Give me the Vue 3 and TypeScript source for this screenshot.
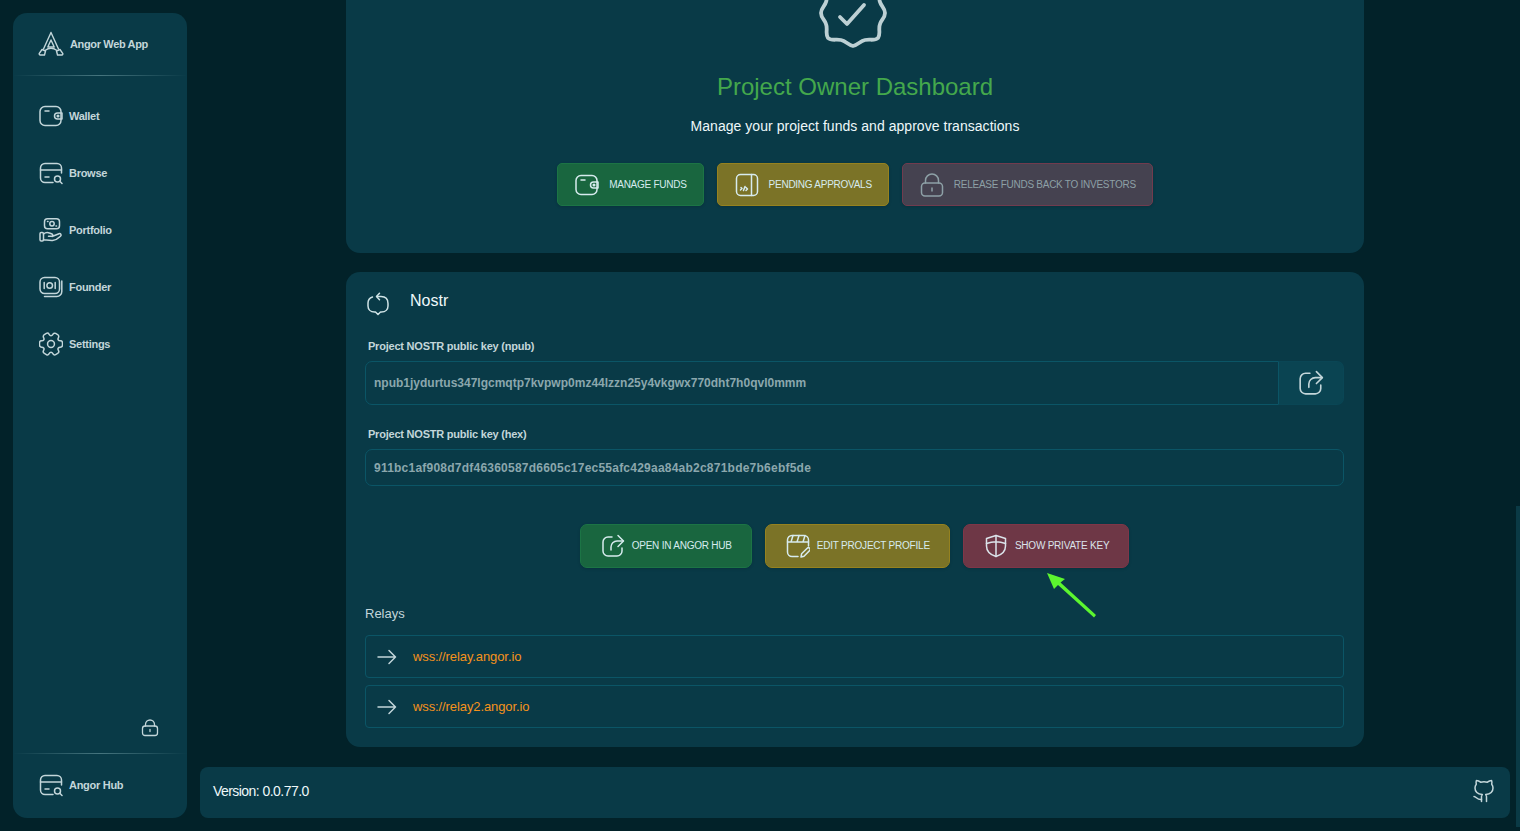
<template>
  <div class="shell">
    <aside class="sidebar">
      <div class="brand">
        <svg class="brand-logo" viewBox="0 0 26 26" fill="none" stroke="currentColor" stroke-width="1.4" stroke-linejoin="round" stroke-linecap="round">
          <path d="M13 1.500 L20.500 18 M13 1.500 L5.500 18" />
          <path d="M13 9 L16.200 16 H9.800 Z" />
          <path d="M7 19.500 Q13 15 19 19.500" />
          <path d="M4 18.500 L7.500 20 L6.500 24 H2 Q.8 23.500 1.300 22.300 Z" />
          <path d="M22 18.500 L18.500 20 L19.500 24 H24 Q25.200 23.500 24.700 22.300 Z" />
        </svg>
        <span>Angor Web App</span>
      </div>
      <div class="rule"></div>
      <nav class="nav">
        <a v-for="item in navItems" :key="item.label" class="nav-item">
          <svg class="nav-icon" viewBox="0 0 24 24" fill="none" stroke="currentColor" stroke-width="1.5" stroke-linecap="round" stroke-linejoin="round" v-html="item.icon"></svg>
          <span>{{ item.label }}</span>
        </a>
      </nav>
      <div class="side-bottom">
        <svg class="side-lock" viewBox="0 0 18 18" fill="none" stroke="currentColor" stroke-width="1.3" stroke-linecap="round">
          <rect x="1.500" y="7" width="15" height="9.500" rx="2.500" />
          <path d="M4.500 7V5.500a4.500 4.500 0 0 1 9 0V7M9 10.500v2" />
        </svg>
      </div>
      <div class="rule"></div>
      <a class="nav-item hub">
        <svg class="nav-icon" viewBox="0 0 24 24" fill="none" stroke="currentColor" stroke-width="1.5" stroke-linecap="round" stroke-linejoin="round" v-html="icons.card"></svg>
        <span>Angor Hub</span>
      </a>
    </aside>

    <div class="main">
      <div class="scroller">
        <section class="card dashboard">
          <svg class="badge" viewBox="0 0 68 72" fill="none" stroke="currentColor" stroke-width="3.800" stroke-linecap="round" stroke-linejoin="round">
            <path d="M34 3 C39 3 41 8 46 9 C51 10 56 8 59 12 C62 16 59 21 61 26 C62 30 66 32 66 37 C66 42 62 44 61 48 C59 53 62 58 59 62 C56 65 51 63 46 64 C41 65 39 69 34 70 C29 69 27 65 22 64 C17 63 12 65 9 62 C6 58 9 53 7 48 C6 44 2 42 2 37 C2 32 6 30 7 26 C9 21 6 16 9 12 C12 8 17 10 22 9 C27 8 29 3 34 3 Z" />
            <path d="M21 41 L28 48 L45 29" />
          </svg>
          <h1>Project Owner Dashboard</h1>
          <p class="lead">Manage your project funds and approve transactions</p>
          <div class="actions top-actions">
            <button type="button" class="action green">
              <svg class="action-icon" viewBox="0 0 24 24" fill="none" stroke="currentColor" stroke-width="1.500" stroke-linecap="round" stroke-linejoin="round" v-html="icons.wallet"></svg>
              MANAGE FUNDS
            </button>
            <button type="button" class="action yellow">
              <svg class="action-icon" viewBox="0 0 24 24" fill="none" stroke="currentColor" stroke-width="1.500" stroke-linecap="round" stroke-linejoin="round">
                <rect x="1.500" y="1.500" width="21" height="21" rx="4" />
                <path d="M16.500 1.500v21M5.500 17l1.500-1.500M6 14.500l1 1M8.500 17.500l1.500-4M11 14.500l1.500 1.500-1.500 1.500" />
              </svg>
              PENDING APPROVALS
            </button>
            <button type="button" class="action muted">
              <svg class="action-icon lock" viewBox="0 0 24 24" fill="none" stroke="currentColor" stroke-width="1.500" stroke-linecap="round">
                <rect x="1.500" y="10" width="21" height="13" rx="3.500" />
                <path d="M5.500 10V7.500a6.500 6.500 0 0 1 13 0V10M12 15v3" />
              </svg>
              RELEASE FUNDS BACK TO INVESTORS
            </button>
          </div>
        </section>

        <section class="card nostr">
          <div class="nostr-head">
            <svg class="nostr-icon" viewBox="0 0 24 24" fill="none" stroke="currentColor" stroke-width="1.500" stroke-linecap="round" stroke-linejoin="round">
              <path d="M11 4.500 H15 C19.500 4.500 22 7 22 11.500 V14 C22 17.500 19.500 20 15.500 20 H14.500 L12 22.500 L9.500 20 H8.500 C4.500 20 2 17.500 2 14 V11 C2 8 3.500 6 6.500 5" />
              <path d="M13.500 1.200 L10.500 4.500 L13.500 7.800" />
            </svg>
            <h2>Nostr</h2>
          </div>
          <label class="field-label first">Project NOSTR public key (npub)</label>
          <div class="input-group">
            <div class="input joined">npub1jydurtus347lgcmqtp7kvpwp0mz44lzzn25y4vkgwx770dht7h0qvl0mmm</div>
            <button type="button" class="share-btn">
              <svg viewBox="0 0 24 24" fill="none" stroke="currentColor" stroke-width="1.500" stroke-linecap="round" stroke-linejoin="round" v-html="icons.share"></svg>
            </button>
          </div>
          <label class="field-label second">Project NOSTR public key (hex)</label>
          <div class="input hex">911bc1af908d7df46360587d6605c17ec55afc429aa84ab2c871bde7b6ebf5de</div>

          <div class="actions nostr-actions">
            <button type="button" class="action green tight">
              <svg class="action-icon" viewBox="0 0 24 24" fill="none" stroke="currentColor" stroke-width="1.500" stroke-linecap="round" stroke-linejoin="round" v-html="icons.share"></svg>
              OPEN IN ANGOR HUB
            </button>
            <button type="button" class="action yellow tight">
              <svg class="action-icon" viewBox="0 0 24 24" fill="none" stroke="currentColor" stroke-width="1.500" stroke-linecap="round" stroke-linejoin="round">
                <path d="M22.500 12V6a4.500 4.500 0 0 0-4.500-4.500H6A4.500 4.500 0 0 0 1.500 6v12A4.500 4.500 0 0 0 6 22.500h6" />
                <path d="M1.500 8h21M7 1.500 5 8M13 1.500 11 8M19 1.500 17 8" />
                <path d="M15 23l.6-3.200 5.600-5.600a1.600 1.600 0 0 1 2.400 2.400L18 22.200Z" />
              </svg>
              EDIT PROJECT PROFILE
            </button>
            <div class="key-wrap">
              <button type="button" class="action red tight">
                <svg class="action-icon shield" viewBox="0 0 24 24" fill="none" stroke="currentColor" stroke-width="1.500" stroke-linecap="round" stroke-linejoin="round">
                  <path d="M12 1.500 L21.500 4.500 V12 C21.500 17.500 17 21 12 22.500 C7 21 2.500 17.500 2.500 12 V4.500 Z" />
                  <path d="M12 1.500V22.500M2.500 9.500Q12 6 21.500 9.500" />
                </svg>
                SHOW PRIVATE KEY
              </button>
              <svg class="pointer" viewBox="0 0 54 48">
                <path d="M2 2 L20 8 L15.500 11.500 L51 44 L49 46.500 L13 14 L9 18 Z" fill="#5cf52f" />
              </svg>
            </div>
          </div>

          <h3 class="relays-title">Relays</h3>
          <div class="relays">
            <div v-for="relay in relays" :key="relay" class="relay">
              <svg viewBox="0 0 20 16" fill="none" stroke="currentColor" stroke-width="1.500" stroke-linecap="round" stroke-linejoin="round">
                <path d="M1 8H18.500M12 1.500 18.500 8 12 14.500" />
              </svg>
              <span>{{ relay }}</span>
            </div>
          </div>
        </section>
      </div>

      <footer class="footer">
        <span>Version: 0.0.77.0</span>
        <svg class="github" viewBox="0 0 22 24" fill="none" stroke="currentColor" stroke-width="1.500" stroke-linecap="round" stroke-linejoin="round">
          <path d="M8.500 22.500V18c-.2-1 .2-1.900.8-2.400C5 15 2 13.500 2 9c0-1.500.5-2.800 1.300-3.800C3 4 3 2.600 3.400 1.500 5 1.600 6.500 2.300 7.600 3.200a11 11 0 0 1 6.800 0c1.100-.9 2.600-1.600 4.200-1.700.4 1.100.4 2.500.1 3.700.8 1 1.300 2.300 1.300 3.800 0 4.500-3 6-7.300 6.600.6.5 1 1.400.8 2.400v4.500" />
          <path d="M1 17.500c2.500.3 3 3.500 7.500 3" />
        </svg>
      </footer>
    </div>

    <div class="scroll-thumb"></div>
  </div>
</template>

<script setup lang="ts">
const icons = {
  wallet:
    '<rect x="1" y="2.500" width="21" height="19" rx="5"/><path d="M6 7h4"/><path d="M23 9h-4.500a3 3 0 0 0 0 6H23Z"/><circle cx="19" cy="12" r=".8"/>',
  card:
    '<path d="M22.500 12V7a4.500 4.500 0 0 0-4.500-4.500H6A4.500 4.500 0 0 0 1.500 7v10A4.500 4.500 0 0 0 6 21.500h8"/><path d="M1.500 9h21M6 16h4"/><circle cx="18.500" cy="18" r="3"/><path d="M20.800 20.300l2.200 2.200"/>',
  hand:
    '<rect x="5.500" y=".8" width="15" height="10" rx="3"/><circle cx="13" cy="5.800" r="2.200"/><path d="M8.500 3.500h.5M17 8h.5"/><rect x="1" y="14.500" width="3.500" height="8.500" rx="1.200"/><path d="M4.500 16c2-1.800 4-2 6-1l2.500 1c1.300.6.8 2.300-.6 2.200H9.500M13 18.500l7-2.800c1.800-.5 2.800 1.200 1.500 2.500-2.500 2.400-5 4-8 4.300-3 .2-6-.5-9-.8"/>',
  money:
    '<rect x="1" y="2.500" width="19.500" height="16" rx="4.500"/><path d="M5.200 7.500v6M16.200 7.500v6"/><circle cx="10.700" cy="10.500" r="2.800"/><path d="M22.800 6v10.500a5 5 0 0 1-5 5H5.500"/>',
  gear:
    '<g transform="translate(-1.800 -1.800) scale(1.150)" stroke-width="1.300"><circle cx="12" cy="12" r="3"/><path d="M2 12.880v-1.760c0-1.040.85-1.900 1.900-1.900 1.810 0 2.550-1.280 1.640-2.850-.52-.9-.21-2.070.7-2.590l1.730-.99c.79-.47 1.810-.19 2.280.6l.11.19c.9 1.570 2.380 1.570 3.290 0l.11-.19c.47-.79 1.490-1.070 2.280-.6l1.730.99c.91.52 1.220 1.690.7 2.590-.91 1.570-.17 2.850 1.640 2.850 1.040 0 1.900.85 1.900 1.900v1.760c0 1.040-.85 1.900-1.900 1.900-1.810 0-2.550 1.280-1.640 2.850.52.91.21 2.070-.7 2.590l-1.730.99c-.79.47-1.810.19-2.280-.6l-.11-.19c-.9-1.570-2.380-1.570-3.290 0l-.11.19c-.47.79-1.490 1.070-2.280.6l-1.730-.99a1.900 1.900 0 0 1-.7-2.590c.91-1.570.17-2.850-1.640-2.850-1.050 0-1.900-.86-1.900-1.900Z"/></g>',
  share:
    '<path d="M11 3H7a5 5 0 0 0-5 5v9a5 5 0 0 0 5 5h9a5 5 0 0 0 5-5v-3"/><path d="M17 1.500 22.500 7 17 12.500"/><path d="M22 7h-6a6 6 0 0 0-6 6v3"/>',
}

const navItems = [
  { label: 'Wallet', icon: icons.wallet },
  { label: 'Browse', icon: icons.card },
  { label: 'Portfolio', icon: icons.hand },
  { label: 'Founder', icon: icons.money },
  { label: 'Settings', icon: icons.gear },
]

const relays = ['wss://relay.angor.io', 'wss://relay2.angor.io']
</script>

<style>
html,
body {
  margin: 0;
  background: #022229;
  overflow: hidden;
}
</style>

<style scoped>
.shell {
  position: relative;
  display: flex;
  gap: 13px;
  height: 831px;
  padding: 13px 10px 13px 13px;
  box-sizing: border-box;
  background: #022229;
  font-family: "Liberation Sans", Arial, sans-serif;
  color: #cfe3e6;
  overflow: hidden;
}

.sidebar {
  flex: 0 0 174px;
  display: flex;
  flex-direction: column;
  border-radius: 14px;
  background: #093a47;
  box-sizing: border-box;
}

.brand {
  display: flex;
  align-items: center;
  gap: 6px;
  height: 62px;
  padding-left: 25px;
  font-size: 11px;
  font-weight: 700;
  letter-spacing: -0.35px;
  color: #c3d6da;
}

.brand-logo {
  width: 26px;
  height: 26px;
  color: #c3d6da;
}

.rule {
  flex: none;
  height: 1px;
  background: linear-gradient(90deg, rgba(120, 165, 172, 0), rgba(120, 165, 172, 0.55) 50%, rgba(120, 165, 172, 0));
}

.nav {
  display: flex;
  flex-direction: column;
  gap: 25px;
  padding-top: 24px;
}

.nav-item {
  display: flex;
  align-items: center;
  gap: 6px;
  height: 32px;
  padding-left: 26px;
  font-size: 11px;
  font-weight: 700;
  letter-spacing: -0.28px;
  color: #c3d6da;
}

.nav-icon {
  flex: none;
  width: 24px;
  height: 24px;
}

.side-bottom {
  flex: 1;
  display: flex;
  align-items: flex-end;
  justify-content: flex-end;
  padding: 0 28px 16px 0;
}

.side-lock {
  width: 18px;
  height: 18px;
  color: #c3d6da;
}

.hub {
  margin: 15px 0 17px;
}

.main {
  flex: 1;
  min-width: 0;
  display: flex;
  flex-direction: column;
  gap: 20px;
  margin-top: -13px;
}

.scroller {
  flex: 1;
  min-height: 0;
  display: flex;
  flex-direction: column;
  align-items: center;
  gap: 19px;
  overflow: hidden;
}

.card {
  flex: none;
  width: 1018px;
  box-sizing: border-box;
  border-radius: 14px;
  background: #093a47;
}

.dashboard {
  display: flex;
  flex-direction: column;
  align-items: center;
  margin-top: -28px;
  height: 281px;
}

.badge {
  flex: none;
  width: 68px;
  height: 72px;
  margin: 4px 4px 0 0;
  color: #bdd0d4;
}

h1 {
  margin: 24px 0 0;
  font-size: 24px;
  line-height: 30px;
  font-weight: 400;
  color: #44a84c;
}

.lead {
  margin: 15px 0 0;
  font-size: 14px;
  line-height: 18px;
  letter-spacing: 0.04px;
  color: #eef8fa;
}

.actions {
  display: flex;
  gap: 13px;
}

.top-actions {
  margin-top: 28px;
}

.action {
  display: flex;
  align-items: center;
  gap: 10px;
  height: 43px;
  padding: 0 16px 0 17px;
  box-sizing: border-box;
  border: 1px solid;
  border-radius: 5px;
  font-family: inherit;
  font-size: 10px;
  line-height: 10px;
  letter-spacing: -0.26px;
  white-space: nowrap;
  color: #d7ebee;
  box-shadow: 0 1px 3px rgba(0, 0, 0, 0.15);
}

.action-icon {
  flex: none;
  width: 24px;
  height: 24px;
}

.action.tight {
  height: 44px;
  padding: 0 19px 0 20px;
  gap: 7px;
  border-radius: 7px;
  letter-spacing: -0.22px;
}

.green {
  background: #19663f;
  border-color: #1c7445;
}

.yellow {
  background: #7b7327;
  border-color: #96821f;
}

.muted {
  background: #454250;
  border-color: #713b4e;
  color: #8da0a6;
}

.red {
  background: #6e3746;
  border-color: #7f3648;
  color: #dbe3ea;
}

.nostr {
  height: 475px;
  padding: 0 20px 0 19px;
}

.nostr-head {
  display: flex;
  align-items: center;
  height: 60px;
}

.nostr-icon {
  width: 24px;
  height: 24px;
  margin: 4px 0 0 1px;
}

h2 {
  margin: 0 0 2px 20px;
  font-size: 16px;
  font-weight: 400;
  color: #eef8fa;
}

.field-label {
  display: block;
  padding-left: 3px;
  font-size: 11px;
  line-height: 14px;
  font-weight: 700;
  letter-spacing: -0.22px;
  color: #c3d6da;
}

.first {
  margin-top: 7px;
}

.second {
  margin-top: 22px;
}

.input-group {
  display: flex;
  margin-top: 8px;
  height: 44px;
}

.input {
  flex: 1;
  display: flex;
  align-items: center;
  padding-left: 8px;
  box-sizing: border-box;
  border: 1px solid #0b5566;
  border-radius: 7px;
  font-size: 12px;
  font-weight: 700;
  color: #8ba7ad;
  background: #093a47;
}

.joined {
  border-radius: 7px 0 0 7px;
}

.share-btn {
  flex: 0 0 65px;
  display: flex;
  align-items: center;
  justify-content: center;
  padding: 0;
  border: 1px solid #0a4655;
  border-left: 0;
  border-radius: 0 7px 7px 0;
  background: #0a4452;
  color: #c3d6da;
}

.share-btn svg {
  width: 26px;
  height: 26px;
}

.hex {
  flex: none;
  height: 37px;
  margin-top: 8px;
  letter-spacing: 0.23px;
}

.nostr-actions {
  justify-content: center;
  margin-top: 38px;
}

.key-wrap {
  position: relative;
}

.pointer {
  position: absolute;
  left: 82px;
  top: 47px;
  width: 54px;
  height: 48px;
}

.relays-title {
  margin: 37px 0 0;
  font-size: 13px;
  line-height: 18px;
  font-weight: 400;
  color: #c3d6da;
}

.relays {
  display: flex;
  flex-direction: column;
  gap: 7px;
  margin-top: 12px;
}

.relay {
  display: flex;
  align-items: center;
  gap: 16px;
  height: 43px;
  padding-left: 11px;
  box-sizing: border-box;
  border: 1px solid #0b5566;
  border-radius: 4px;
  font-size: 13px;
  letter-spacing: -0.1px;
  color: #f5921c;
}

.relay svg {
  width: 20px;
  height: 16px;
  color: #c3d6da;
}

.footer {
  flex: none;
  display: flex;
  align-items: center;
  justify-content: space-between;
  height: 51px;
  padding: 0 15px 3px 13px;
  box-sizing: border-box;
  border-radius: 8px;
  background: #093a47;
  font-size: 14px;
  letter-spacing: -0.55px;
  color: #eef8fa;
}

.github {
  width: 22px;
  height: 24px;
  color: #c3d6da;
}

.scroll-thumb {
  position: absolute;
  right: 0;
  top: 506px;
  width: 4px;
  height: 321px;
  background: #0a3a45;
}
</style>
